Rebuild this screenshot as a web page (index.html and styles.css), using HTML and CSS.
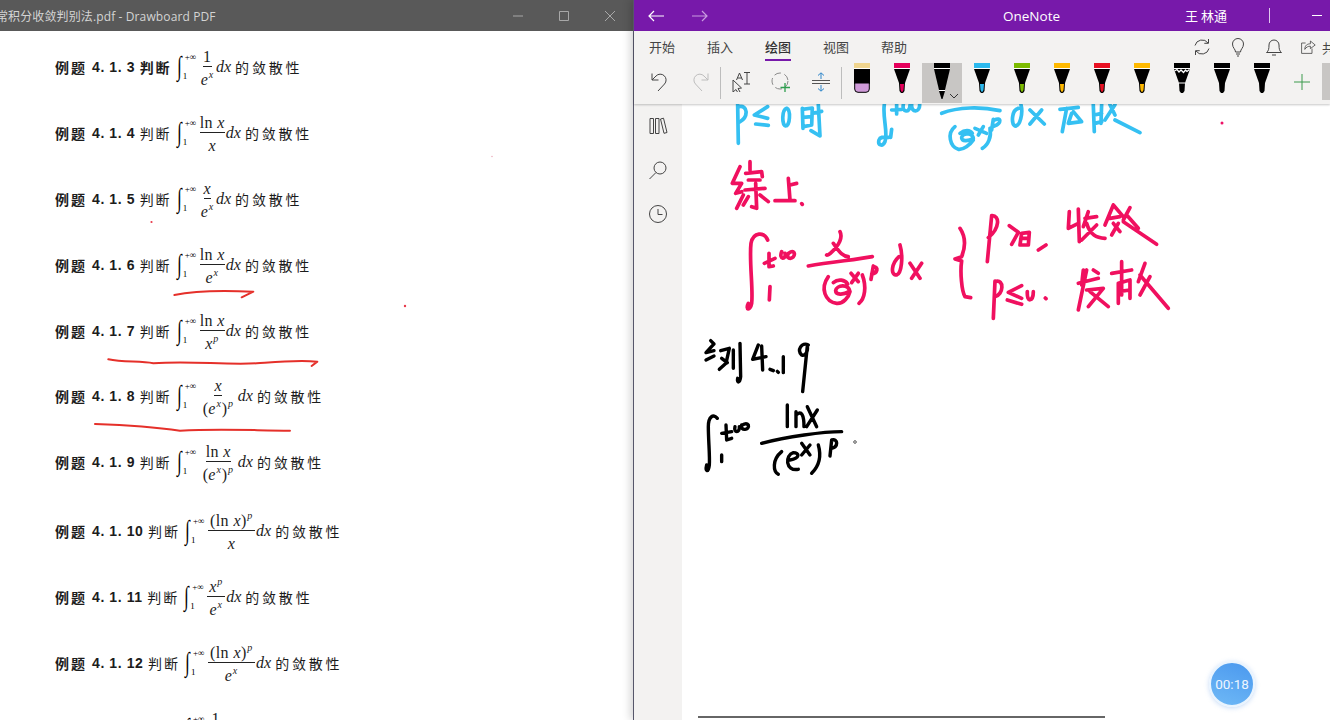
FILE: index.html
```html
<!DOCTYPE html>
<html lang="zh">
<head>
<meta charset="utf-8">
<title>OneNote</title>
<link rel="stylesheet" href="styles.css">
</head>
<body>
<svg class="defs" width="0" height="0" aria-hidden="true">
  <symbol id="pen" viewBox="0 0 16 30">
    <rect width="16" height="5" fill="currentColor"/>
    <rect width="16" height="1" y="5" fill="#fff"/>
    <polygon points="0,6 16,6 11,20 5,20" fill="#000"/>
    <polygon points="5,20 11,20 10.5,28 9,30 7,30 5.500,28" fill="#000"/>
    <polygon points="6,21 10,21 9.500,27 8,29.500 6.500,27" fill="currentColor"/>
  </symbol>
</svg>
<div class="desk">
  <section class="pdf">
    <header class="pdf-title">
      <span class="pdf-name">常积分收敛判别法.pdf - Drawboard PDF</span>
      <div class="win-btns">
        <svg class="win-btn" viewBox="0 0 12 12"><path d="M1 6H11"/></svg>
        <svg class="win-btn" viewBox="0 0 12 12"><path d="M1.500 1.500H10.500V10.500H1.500Z"/></svg>
        <svg class="win-btn" viewBox="0 0 12 12"><path d="M1 1L11 11M11 1L1 11"/></svg>
      </div>
    </header>
    <div class="pdf-page">
      <div class="row"><b class="zh">例题</b><b class="num">4. 1. 3</b><b class="zh">判断</b><span class="integral"><span class="int">∫</span><span class="lims"><span class="up">+∞</span><span>1</span></span></span><span class="frac"><span class="n">1</span><span class="d"><i>e<sup>x</sup></i></span></span><i class="dx">dx</i><span class="tail">的敛散性</span></div>
      <div class="row"><b class="zh">例题</b><b class="num">4. 1. 4</b><span class="zh">判断</span><span class="integral"><span class="int">∫</span><span class="lims"><span class="up">+∞</span><span>1</span></span></span><span class="frac"><span class="n">ln <i>x</i></span><span class="d"><i>x</i></span></span><i class="dx">dx</i><span class="tail">的敛散性</span></div>
      <div class="row"><b class="zh">例题</b><b class="num">4. 1. 5</b><span class="zh">判断</span><span class="integral"><span class="int">∫</span><span class="lims"><span class="up">+∞</span><span>1</span></span></span><span class="frac"><span class="n"><i>x</i></span><span class="d"><i>e<sup>x</sup></i></span></span><i class="dx">dx</i><span class="tail">的敛散性</span></div>
      <div class="row"><b class="zh">例题</b><b class="num">4. 1. 6</b><span class="zh">判断</span><span class="integral"><span class="int">∫</span><span class="lims"><span class="up">+∞</span><span>1</span></span></span><span class="frac"><span class="n">ln <i>x</i></span><span class="d"><i>e<sup>x</sup></i></span></span><i class="dx">dx</i><span class="tail">的敛散性</span></div>
      <div class="row"><b class="zh">例题</b><b class="num">4. 1. 7</b><span class="zh">判断</span><span class="integral"><span class="int">∫</span><span class="lims"><span class="up">+∞</span><span>1</span></span></span><span class="frac"><span class="n">ln <i>x</i></span><span class="d"><i>x<sup>p</sup></i></span></span><i class="dx">dx</i><span class="tail">的敛散性</span></div>
      <div class="row row-up"><b class="zh">例题</b><b class="num">4. 1. 8</b><span class="zh">判断</span><span class="integral"><span class="int">∫</span><span class="lims"><span class="up">+∞</span><span>1</span></span></span><span class="frac"><span class="n"><i>x</i></span><span class="d d-wide">(<i>e<sup>x</sup></i>)<sup><i>p</i></sup></span></span><i class="dx">dx</i><span class="tail">的敛散性</span></div>
      <div class="row"><b class="zh">例题</b><b class="num">4. 1. 9</b><span class="zh">判断</span><span class="integral"><span class="int">∫</span><span class="lims"><span class="up">+∞</span><span>1</span></span></span><span class="frac"><span class="n">ln <i>x</i></span><span class="d d-wide">(<i>e<sup>x</sup></i>)<sup><i>p</i></sup></span></span><i class="dx">dx</i><span class="tail">的敛散性</span></div>
      <div class="row row-gap"><b class="zh">例题</b><b class="num">4. 1. 10</b><span class="zh">判断</span><span class="integral"><span class="int">∫</span><span class="lims"><span class="up">+∞</span><span>1</span></span></span><span class="frac"><span class="n n-wide">(ln <i>x</i>)<sup><i>p</i></sup></span><span class="d"><i>x</i></span></span><i class="dx">dx</i><span class="tail">的敛散性</span></div>
      <div class="row"><b class="zh">例题</b><b class="num">4. 1. 11</b><span class="zh">判断</span><span class="integral"><span class="int">∫</span><span class="lims"><span class="up">+∞</span><span>1</span></span></span><span class="frac"><span class="n n-wide"><i>x<sup>p</sup></i></span><span class="d"><i>e<sup>x</sup></i></span></span><i class="dx">dx</i><span class="tail">的敛散性</span></div>
      <div class="row"><b class="zh">例题</b><b class="num">4. 1. 12</b><span class="zh">判断</span><span class="integral"><span class="int">∫</span><span class="lims"><span class="up">+∞</span><span>1</span></span></span><span class="frac"><span class="n n-wide">(ln <i>x</i>)<sup><i>p</i></sup></span><span class="d"><i>e<sup>x</sup></i></span></span><i class="dx">dx</i><span class="tail">的敛散性</span></div>
      <div class="row"><b class="zh">例题</b><b class="num">4. 1. 13</b><span class="zh">判断</span><span class="integral"><span class="int">∫</span><span class="lims"><span class="up">+∞</span><span>1</span></span></span><span class="frac"><span class="n">1</span><span class="d"><i>e<sup>x</sup></i></span></span><i class="dx">dx</i><span class="tail">的敛散性</span></div>
      <svg class="pdf-ink" viewBox="0 31 633 689">
        <g class="ink-red" transform="translate(40 240) scale(.3333)">
          <path d="M403 165C450 155 540 150 640 155L605 172"/>
          <path d="M205 358C250 368 300 362 340 370C450 362 550 375 650 370C720 365 770 360 832 365L815 378"/>
          <path d="M165 552C250 555 350 562 420 572C550 565 650 572 750 572"/>
        </g>
        <circle cx="151.500" cy="222" r="1.100" fill="#e8394a"/>
        <circle cx="405" cy="306" r="1.200" fill="#e8394a"/>
        <circle cx="492" cy="156.500" r=".7" fill="#e8a0b0"/>
      </svg>
    </div>
  </section>

  <section class="note">
    <header class="note-title">
      <div class="nav">
        <svg class="nav-arrow" viewBox="0 0 16 12"><path d="M16 6H1M6 1L1 6L6 11"/></svg>
        <svg class="nav-arrow nav-off" viewBox="0 0 16 12"><path d="M0 6H15M10 1L15 6L10 11"/></svg>
      </div>
      <span class="app-name">OneNote</span>
      <span class="user">王 林通</span>
      <span class="title-sep"></span>
      <span class="min"></span>
    </header>

    <div class="ribbon">
      <nav class="tabs">
        <span class="tab">开始</span>
        <span class="tab">插入</span>
        <span class="tab tab-on">绘图</span>
        <span class="tab">视图</span>
        <span class="tab">帮助</span>
        <div class="tab-tools">
          <svg class="ico" viewBox="0 0 20 20"><path d="M3 8.500A7.300 7.300 0 0 1 16 6M16.500 2V6.300H12.300M17 11.500A7.300 7.300 0 0 1 4 14M3.500 18V13.700H7.700"/></svg>
          <svg class="ico" viewBox="0 0 20 20"><path d="M7.500 15C7.500 12 4.500 11 4.500 7A5.500 5.500 0 0 1 15.500 7C15.500 11 12.500 12 12.500 15ZM8 17H12M9 19H11"/></svg>
          <svg class="ico" viewBox="0 0 20 20"><path d="M2.500 15.500C4.500 14 5 12 5 8A5 5 0 0 1 15 8C15 12 15.500 14 17.500 15.500ZM8 18H12"/></svg>
          <svg class="ico ico-share" viewBox="0 0 20 20"><path d="M7 5H2V18H15V12M6 13C6 8 9 6 13 6V2.500L19 7.500L13 12V9C10 9 8 10 6 13Z"/></svg>
          <span class="share-text">共</span>
        </div>
      </nav>
      <div class="tools">
        <button class="tool"><svg class="ico" viewBox="0 0 20 20"><path d="M8 19L14.500 12A5.800 5.800 0 0 0 6 4L2 8M2 1.500V8H8.500"/></svg></button>
        <button class="tool"><svg class="ico ico-off" viewBox="0 0 20 20"><path d="M12 19L5.500 12A5.800 5.800 0 0 1 14 4L18 8M18 1.500V8H11.500"/></svg></button>
        <span class="sep"></span>
        <button class="tool"><svg class="ico ico-select" viewBox="0 0 20 20"><path d="M2 8V20L5 17.500L7 21L9 20L7 16.500L10.500 16ZM5.500 8L8.500 1L11.500 8M6.500 6H10.500M13 0.500H19M13 12H19M16 0.500V12"/></svg></button>
        <button class="tool"><svg class="ico ico-lasso" viewBox="0 0 22 22"><circle cx="10" cy="10" r="8" stroke-dasharray="7 3.500"/><path class="green" d="M15 12V21M10.500 16.500H20"/></svg></button>
        <button class="tool"><svg class="ico ico-space" viewBox="0 0 20 20"><path class="dark" d="M1 8.500H19M1 11.500H19"/><path class="blue" d="M10 7V1M7 3.500L10 .8L13 3.500M10 13V19M7 16.500L10 19.200L13 16.500"/></svg></button>
        <span class="sep"></span>
        <button class="pen"><svg class="pen-svg" viewBox="0 0 16 30"><rect width="16" height="5" fill="#f0d58f"/><rect width="16" height="1" y="5" fill="#fff"/><rect width="16" height="15" y="6" fill="#000"/><path d="M.7 20H15.300V26A3.300 3.300 0 0 1 12 29.300H4A3.300 3.300 0 0 1 .7 26Z" fill="#cf9ad8" stroke="#000"/></svg></button>
        <button class="pen c-pink"><svg class="pen-svg"><use href="#pen"/></svg></button>
        <button class="pen pen-on"><svg class="pen-tall" viewBox="0 0 16 36"><rect width="16" height="5" fill="#000"/><rect width="16" height="1" y="5" fill="#fff"/><polygon points="0,6 16,6 11,27 5,27" fill="#000"/><rect x="5" y="27" width="6" height="1" fill="#fff"/><polygon points="5,28 11,28 8.500,36 7.500,36" fill="#000"/></svg><svg class="chev" viewBox="0 0 10 6"><path d="M1 1L5 5L9 1"/></svg></button>
        <button class="pen c-cyan"><svg class="pen-svg"><use href="#pen"/></svg></button>
        <button class="pen c-green"><svg class="pen-svg"><use href="#pen"/></svg></button>
        <button class="pen c-amber"><svg class="pen-svg"><use href="#pen"/></svg></button>
        <button class="pen c-red"><svg class="pen-svg"><use href="#pen"/></svg></button>
        <button class="pen c-amber"><svg class="pen-svg"><use href="#pen"/></svg></button>
        <button class="pen c-black"><svg class="pen-svg" viewBox="0 0 16 30"><use href="#pen"/><path d="M.5 8L3 6.500L5 9L7 7L9.500 9.500L11.500 7L13 8.500L15.500 6.500" fill="none" stroke="#fff" stroke-width="1.300"/><path d="M4.500 20H11.500" stroke="#fff" stroke-width="1"/></svg></button>
        <button class="pen c-black"><svg class="pen-svg"><use href="#pen"/></svg></button>
        <button class="pen c-black"><svg class="pen-svg"><use href="#pen"/></svg></button>
        <button class="tool"><svg class="ico ico-plus" viewBox="0 0 18 18"><path d="M9 1V17M1 9H17"/></svg></button>
        <span class="tool-end"></span>
      </div>
    </div>

    <div class="workspace">
      <aside class="rail">
        <svg class="ico" viewBox="0 0 20 20"><path d="M2 2.500H5.500V17.500H2ZM7.500 2.500H11V17.500H7.500ZM12.500 3L15.500 2.200L19 16.500L16 17.300Z"/></svg>
        <svg class="ico" viewBox="0 0 20 20"><circle cx="12" cy="8" r="6"/><path d="M8 12.500L1.500 19"/></svg>
        <svg class="ico" viewBox="0 0 20 20"><circle cx="10" cy="10" r="8.500"/><path d="M10 5V10.500H14.500"/></svg>
      </aside>
      <main class="canvas">
        <svg class="note-ink" viewBox="682 104 648 616">
          <g class="ink-blue" transform="translate(725 100) scale(.3333)">
            <path d="M38 14L40 130"/><path d="M42 20C68 14 72 50 44 66"/>
            <path d="M128 20L88 45L128 55M92 72L130 76"/>
            <path d="M185 25C170 30 170 75 182 78C195 78 198 30 185 25Z"/>
            <path d="M232 25L234 85M232 28L262 24L260 75L236 80M234 52L260 50M262 40L290 34M280 14L285 108L258 92"/>
            <path d="M478 14C472 50 490 100 480 125C472 142 458 135 462 120C466 108 480 112 492 112M500 88L497 112"/>
            <path d="M500 30L530 28M515 14L515 42M535 14C530 38 555 40 555 16M560 14C558 40 585 38 584 14"/>
            <path d="M650 40C700 20 770 20 825 32"/>
            <path d="M690 80C665 100 675 140 700 148C715 150 735 135 745 120C750 100 715 95 710 112C708 125 730 125 745 115M705 100C720 88 735 90 742 100M750 85L785 100M775 80L760 105"/>
            <path d="M795 85C800 110 790 135 772 145M805 58L800 90M808 60C830 50 830 70 808 78"/>
            <path d="M880 25C860 30 858 70 870 78C885 80 895 40 888 14M915 30L958 72M950 30L915 72"/>
            <path d="M1005 28L1060 22M1025 25L1012 95M1040 40L1030 70L1070 65L1045 35"/>
            <path d="M1105 14L1108 95M1130 14L1128 70M1108 45L1130 40M1110 70L1130 65M1155 14L1170 45M1170 60L1245 98M1140 60L1170 14"/>
          </g>
          <g class="ink-pink" transform="translate(725 160) scale(.3333)">
            <path d="M45 20L22 70L50 70L32 100L50 95M35 145L55 105M75 30L75 5M62 40L110 35L112 50M70 60L105 60M60 90L120 85M92 70L95 145L80 140M70 110L55 135M105 105L130 125"/>
            <path d="M190 55L195 120M195 75L215 70M150 122L210 122"/>
            <path d="M230 131L232 133"/>
            <path d="M128 240C118 215 85 215 78 250C72 300 85 390 80 430C75 455 60 450 70 430"/>
            <path d="M118 310L150 295M132 280L132 320L145 318M170 275C160 300 185 300 180 280M190 280C180 300 210 300 208 280C205 270 190 275 185 290M135 380L133 420"/>
            <path d="M345 215C360 245 310 290 305 285M325 250C345 280 355 290 370 290M250 318C320 305 390 300 442 290"/>
            <path d="M310 350C285 385 300 425 335 430C355 432 372 410 375 395C370 370 335 375 332 392C332 405 355 405 372 395M325 368C340 355 360 360 368 372M378 340L400 365M400 340L380 368"/>
            <path d="M412 345C425 380 420 415 402 430M445 318L438 358M445 320C462 320 458 340 440 342"/>
            <path d="M522 290C500 310 495 345 515 345C530 340 535 290 525 255M555 310L585 355M590 310L560 355"/>
          </g>
          <g class="ink-pink" transform="translate(950 195) scale(.3333)">
            <path d="M30 100C50 130 45 160 35 185L15 192L35 198C30 230 35 290 45 305L62 308"/>
            <path d="M125 62L112 200M125 62C150 60 150 100 115 128"/>
            <path d="M178 92L205 112L185 148M215 115L210 150M215 115L238 112L235 150L210 150M212 130L235 130M265 165L288 150"/>
            <path d="M358 50L355 100L385 85M385 42L388 140M415 50L400 95M405 70L440 65M410 85C420 120 440 128 465 130M440 90L395 135"/>
            <path d="M490 30L465 90M490 30L520 65M480 70L510 65M490 85L510 110M505 85L485 120M540 38L520 75M530 60L565 100M520 80L620 148"/>
            <path d="M135 258L130 370M135 260C165 250 160 300 135 305"/>
            <path d="M215 272L175 292L215 310M172 315L215 328M232 290C230 325 250 320 250 290M286 309L288 311"/>
            <path d="M400 225L395 270M410 225L385 345M385 265L445 250M410 285L460 280L415 335M420 290L475 335M430 225L445 235"/>
            <path d="M515 200L515 300M485 235L545 225M505 265L505 325M505 265L540 255L540 310M505 290L540 285M585 205L565 260M570 240L655 340M600 245L570 300"/>
          </g>
          <g class="ink-black" transform="translate(690 330) scale(.3333)">
            <path d="M62 32L72 42M70 44L48 68L72 62M48 90L72 78"/>
            <path d="M92 62L118 55L108 100L88 118M95 85L112 98M130 60L130 115M150 40L152 140C150 160 140 160 143 145"/>
            <path d="M205 45L188 88L228 80M215 48L218 120M240 118L250 122M280 80L280 128M262 124L265 127"/>
            <path d="M355 45C335 35 320 60 335 75C345 80 355 65 352 48L338 185"/>
            <path d="M82 265C70 250 55 260 55 290C55 330 60 380 58 405C55 430 45 425 50 405M95 375L95 395"/>
            <path d="M95 310L125 305M108 285L110 330L125 325M135 290C130 310 150 310 148 290M155 285C150 305 180 300 175 285C170 278 155 282 152 292"/>
            <path d="M292 225L292 290M318 245L318 290M318 255C335 240 342 255 342 290M352 230L380 290M382 240L350 290"/>
            <path d="M215 340C290 320 400 305 455 305"/>
            <path d="M275 365C245 390 250 425 265 433M300 390C330 385 330 368 310 368C285 375 285 425 325 418M335 340L360 375M360 345L335 375"/>
            <path d="M385 345C395 380 385 410 365 430M425 330L420 378M425 330C445 325 445 350 425 355"/>
          </g>
          <circle class="ink-dot" cx="855" cy="442" r="1.300"/>
          <circle cx="1222" cy="123" r="1.500" fill="#ee1166"/>
        </svg>
        <div class="timer">00:18</div>
        <span class="scrollbar"></span>
      </main>
    </div>
  </section>
</div>
</body>
</html>
```

FILE: styles.css
```css
* { box-sizing: border-box; }

html, body {
  margin: 0;
  height: 100%;
  overflow: hidden;
  background: #fff;
}

.defs { position: absolute; }

.desk {
  display: flex;
  width: 1330px;
  height: 720px;
  overflow: hidden;
}

/* PDF window */
.pdf {
  width: 633px;
  flex: none;
  display: flex;
  flex-direction: column;
}

.pdf-title {
  height: 31px;
  flex: none;
  display: flex;
  align-items: center;
  background: #595959;
  overflow: hidden;
}

.pdf-name {
  margin-left: -4px;
  flex: 1;
  white-space: nowrap;
  color: #d4d4d4;
  letter-spacing: .12px;
  font: 12px "Open Sans", "Noto Sans CJK SC", sans-serif;
}

.win-btns {
  display: flex;
  gap: 34px;
  padding-right: 17px;
}

.win-btn {
  width: 12px;
  height: 12px;
  fill: none;
  stroke: #a8a8a8;
  stroke-width: 1;
}

.pdf-page {
  position: relative;
  flex: 1;
  padding-top: 3px;
  overflow: hidden;
  background: #fff;
}

.row {
  display: flex;
  align-items: center;
  height: 66px;
  padding-left: 55px;
  color: #1c1c1c;
  font: 14px "Noto Sans CJK SC", sans-serif;
}

.row-up { margin-top: -1px; }
.row-gap { margin-top: 3px; }

.zh {
  letter-spacing: 2px;
  line-height: 1;
}

.num {
  margin: 0 4.500px 0 5px;
  font: bold 14px "Liberation Sans", sans-serif;
  letter-spacing: .6px;
}

.integral {
  display: flex;
  align-items: stretch;
  height: 28px;
  margin-left: 5px;
  color: #000;
  font-family: "Liberation Serif", serif;
}

.int {
  width: 6px;
  font-size: 27px;
  line-height: 27px;
  transform: scaleX(.62);
  transform-origin: left center;
}

.lims {
  display: flex;
  flex-direction: column;
  justify-content: space-between;
  width: 16px;
  font-size: 9px;
  line-height: 9px;
}

.up { padding-left: 2px; }

.frac {
  display: flex;
  flex-direction: column;
  align-items: center;
  margin-left: 1px;
  letter-spacing: .4px;
  font: 16px/20px "Liberation Serif", serif;
}

.frac sup {
  margin: 0 .5px;
  font-size: 10px;
  line-height: 0;
  vertical-align: 7px;
}

.n, .d {
  display: block;
  height: 20px;
  white-space: nowrap;
}

.n { border-bottom: 1px solid #222; line-height: 19px; }
.d { padding: 0 1px; line-height: 26px; }
.n-wide { padding: 0 2px; }
.d-wide { padding: 0 3px; }

.dx {
  margin-left: 1px;
  font: italic 16px "Liberation Serif", serif;
}

.tail {
  margin-left: 4px;
  letter-spacing: 2.800px;
  line-height: 1;
}

.pdf-ink {
  position: absolute;
  left: 0;
  top: 0;
  width: 633px;
  height: 689px;
  pointer-events: none;
}

.ink-red path {
  fill: none;
  stroke: #e5302a;
  stroke-width: 2px;
  vector-effect: non-scaling-stroke;
  stroke-linecap: round;
  stroke-linejoin: round;
}

/* OneNote window */
.note {
  position: relative;
  z-index: 1;
  flex: 1;
  min-width: 0;
  display: flex;
  flex-direction: column;
  border-left: 1px solid #56566a;
  box-shadow: -3px 0 8px rgba(0, 0, 0, .16);
  background: #fff;
}

.note-title {
  position: relative;
  height: 31px;
  flex: none;
  display: flex;
  align-items: center;
  background: #7719aa;
  color: #fff;
  font-family: "Open Sans", "Noto Sans CJK SC", sans-serif;
}

.nav {
  display: flex;
  gap: 28px;
  padding-left: 14px;
}

.nav-arrow {
  width: 16px;
  height: 12px;
  fill: none;
  stroke: #fff;
  stroke-width: 1.200;
}

.nav-off { stroke: #c99be0; }

.app-name {
  margin-left: 295px;
  font-size: 13.500px;
}

.user {
  margin-left: 125px;
  font: 13px "Noto Sans CJK SC", sans-serif;
}

.title-sep {
  width: 1px;
  height: 15px;
  margin-left: 42px;
  background: #e0c8ee;
}

.min {
  width: 10px;
  height: 1px;
  margin-left: 42px;
  background: #fff;
}

.ribbon {
  position: relative;
  z-index: 1;
  flex: none;
  height: 73px;
  background: #f3f2f1;
  box-shadow: 0 1px 2px rgba(0, 0, 0, .22);
}

.tabs {
  position: relative;
  height: 32px;
  display: flex;
  align-items: center;
  gap: 32px;
  padding-left: 15px;
  overflow: hidden;
}

.tab {
  position: relative;
  flex: none;
  height: 32px;
  white-space: nowrap;
  color: #444;
  font: 13px/32px "Noto Sans CJK SC", sans-serif;
}

.tab-on { color: #333; font-weight: 500; }

.tab-on::after {
  content: "";
  position: absolute;
  left: 0;
  right: 0;
  bottom: 2px;
  height: 2px;
  background: #7719aa;
}

.tab-tools {
  flex: none;
  display: flex;
  align-items: center;
  gap: 16px;
  margin-left: 253px;
  white-space: nowrap;
}

.ico {
  width: 20px;
  height: 20px;
  fill: none;
  stroke: #444;
  stroke-width: 1;
}

.ico-off { stroke: #bdbdbd; }

.ico-share {
  width: 16px;
  height: 16px;
  margin-right: -10px;
}

.share-text {
  font: 13px "Noto Sans CJK SC", sans-serif;
  color: #444;
}

.tools {
  display: flex;
  align-items: flex-start;
  height: 41px;
  padding-left: 6px;
}

.tool, .pen {
  width: 40px;
  height: 40px;
  flex: none;
  display: flex;
  justify-content: center;
  padding: 0;
  border: 0;
  background: none;
}

.tool { align-items: center; padding-bottom: 3px; }

.pen { position: relative; align-items: flex-start; }

.pen-svg {
  width: 16px;
  height: 30px;
  color: currentColor;
}

.pen-tall {
  width: 16px;
  height: 36px;
}

.pen.pen-on { background: #c8c6c4; }

.chev {
  position: absolute;
  right: 3px;
  bottom: 4px;
  width: 10px;
  height: 6px;
  fill: none;
  stroke: #333;
}

.c-pink { color: #e5005b; }
.c-black { color: #000; }
.c-cyan { color: #2cb9ee; }
.c-green { color: #7cbb00; }
.c-amber { color: #ffb900; }
.c-red { color: #e81123; }

.sep {
  width: 1px;
  height: 32px;
  flex: none;
  margin-top: 4px;
  background: #bdbdbd;
}

.tool-end {
  width: 8px;
  height: 37px;
  background: #c8c6c4;
}

.ico-lasso { stroke: #8a8a8a; width: 22px; height: 22px; }
.ico-lasso .green { stroke: #2e9e4f; stroke-width: 1.300; }
.ico-space .dark { stroke: #555; }
.ico-space .blue { stroke: #2f86c9; }
.ico-plus { width: 18px; height: 18px; stroke: #3b9a4d; }

.workspace {
  flex: 1;
  display: flex;
  min-height: 0;
}

.rail {
  width: 48px;
  flex: none;
  display: flex;
  flex-direction: column;
  align-items: center;
  gap: 24px;
  padding-top: 12px;
  background: #f3f2f1;
}

.canvas {
  position: relative;
  flex: 1;
  overflow: hidden;
  background: #fff;
}

.note-ink {
  display: block;
  width: 648px;
  height: 616px;
}

.ink-blue path, .ink-pink path, .ink-black path {
  fill: none;
  stroke-linecap: round;
  stroke-linejoin: round;
  vector-effect: non-scaling-stroke;
  stroke-width: 3.700px;
}

.ink-blue path { stroke: #35c0f2; }
.ink-pink path { stroke: #f0105f; }
.ink-black path { stroke: #000; stroke-width: 3.400px; }

.ink-dot {
  fill: none;
  stroke: #555;
  stroke-width: 1;
}

.timer {
  position: absolute;
  right: 75px;
  bottom: 13px;
  width: 46px;
  height: 46px;
  display: flex;
  align-items: center;
  justify-content: center;
  border: 2px solid #e9f4fe;
  border-radius: 50%;
  background: linear-gradient(200deg, #4a98ee, #6fb9f6);
  box-shadow: 0 1px 5px rgba(90, 150, 230, .35);
  color: #eef6ff;
  font: 13.500px Roboto, sans-serif;
}

.scrollbar {
  position: absolute;
  left: 16px;
  bottom: 2px;
  width: 407px;
  height: 2px;
  background: #666;
}
```
